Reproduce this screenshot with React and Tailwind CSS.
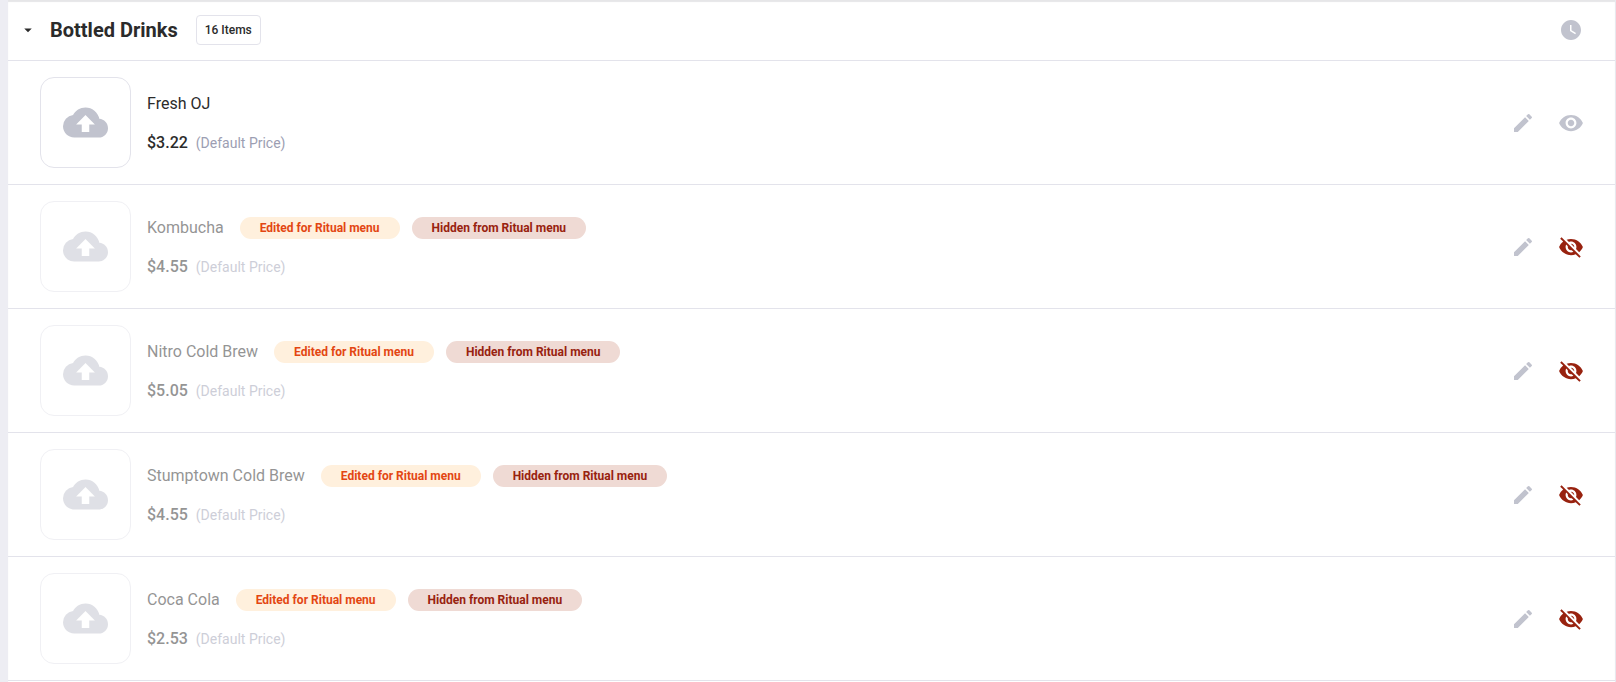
import clsx from "clsx";
import {
  MdArrowDropDown,
  MdCloudUpload,
  MdEdit,
  MdVisibility,
  MdVisibilityOff,
  MdWatchLater,
} from "react-icons/md";

const items = [
  { name: "Fresh OJ", price: "$3.22", hidden: false },
  { name: "Kombucha", price: "$4.55", hidden: true },
  { name: "Nitro Cold Brew", price: "$5.05", hidden: true },
  { name: "Stumptown Cold Brew", price: "$4.55", hidden: true },
  { name: "Coca Cola", price: "$2.53", hidden: true },
];

function Badge({ className, children }) {
  return (
    <span
      className={clsx(
        "flex h-[22px] items-center rounded-full px-5 text-xs font-bold",
        className,
      )}
    >
      {children}
    </span>
  );
}

function IconButton({ label, children }) {
  return (
    <button
      type="button"
      aria-label={label}
      className="flex h-8 w-8 items-center justify-center text-[#c1c3ce]"
    >
      {children}
    </button>
  );
}

function MenuItem({ item }) {
  const faded = item.hidden && "opacity-50";

  return (
    <li className="flex items-center border-b border-[#e3e3eb] py-4 pl-8 pr-7">
      <button
        type="button"
        aria-label={`Upload photo of ${item.name}`}
        className={clsx(
          "flex h-[91px] w-[91px] shrink-0 items-center justify-center rounded-[14px] border border-[#e3e3eb] text-[#c1c3ce]",
          faded,
        )}
      >
        <MdCloudUpload size={45} />
      </button>
      <div className="ml-4 min-w-0 flex-1 pt-0.5">
        <div className="flex h-6 items-center gap-4">
          <p className={clsx("truncate text-base", faded)}>{item.name}</p>
          {item.hidden && (
            <div className="flex shrink-0 gap-3">
              <Badge className="bg-[#fff0dd] text-[#e34612]">
                Edited for Ritual menu
              </Badge>
              <Badge className="bg-[#efdad4] text-[#98220f]">
                Hidden from Ritual menu
              </Badge>
            </div>
          )}
        </div>
        <p className={clsx("mt-[15px] flex h-6 items-center gap-2", faded)}>
          <span className="text-base font-medium">{item.price}</span>
          <span className="text-sm text-[#9c9eb2]">(Default Price)</span>
        </p>
      </div>
      <div className="flex shrink-0 gap-4">
        <IconButton label={`Edit ${item.name}`}>
          <MdEdit size={24} />
        </IconButton>
        {item.hidden ? (
          <IconButton label={`Show ${item.name}`}>
            <MdVisibilityOff size={26} className="text-[#98220f]" />
          </IconButton>
        ) : (
          <IconButton label={`Hide ${item.name}`}>
            <MdVisibility size={26} />
          </IconButton>
        )}
      </div>
    </li>
  );
}

export default function App() {
  return (
    <main className="min-h-screen bg-[#ededf3] pl-2 font-['Roboto',sans-serif] text-[#2b2b2b]">
      <section className="min-h-screen border-r border-[#e8e8ee] bg-white shadow-[inset_0_2px_1px_#e6e6e8]">
        <header className="flex h-[61px] items-center border-b border-[#e3e3eb] pl-[10px] pr-7">
          <button
            type="button"
            aria-label="Collapse section"
            className="flex w-5 justify-center"
          >
            <MdArrowDropDown size={18} />
          </button>
          <h2 className="ml-3 text-xl font-bold">Bottled Drinks</h2>
          <span className="ml-[18px] flex h-[30px] items-center rounded border border-[#e3e3eb] px-2 text-xs font-medium">
            16 Items
          </span>
          <div className="ml-auto">
            <IconButton label="Section hours">
              <MdWatchLater size={24} />
            </IconButton>
          </div>
        </header>
        <ul>
          {items.map((item) => (
            <MenuItem key={item.name} item={item} />
          ))}
        </ul>
      </section>
    </main>
  );
}
